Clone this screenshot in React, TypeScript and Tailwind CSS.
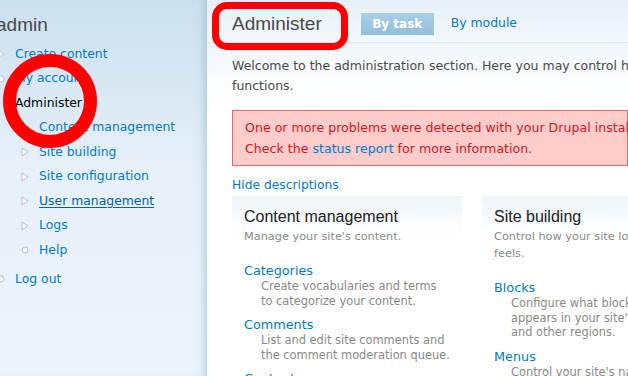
import React from "react";

const verdana = { fontFamily: '"DejaVu Sans", Verdana, sans-serif' };
const arial = { fontFamily: '"Liberation Sans", Arial, sans-serif' };

const Triangle = () => (
  <svg width="8" height="10" viewBox="0 0 8 10" className="shrink-0">
    <path d="M1 1 L7 5 L1 9 Z" fill="#ffffff" stroke="#b8bcc0" strokeWidth="1" strokeLinejoin="round" />
  </svg>
);

const Circle = () => (
  <svg width="8" height="8" viewBox="0 0 8 8" className="shrink-0">
    <circle cx="4" cy="4" r="3" fill="#ffffff" stroke="#b8bcc0" strokeWidth="1" />
  </svg>
);

type Item = { label: string; bullet: "tri" | "dot" | "none"; active?: boolean; hover?: boolean };

const topItems: Item[] = [
  { label: "Create content", bullet: "tri" },
  { label: "My account", bullet: "dot" },
  { label: "Administer", bullet: "none", active: true },
];

const subItems: Item[] = [
  { label: "Content management", bullet: "tri" },
  { label: "Site building", bullet: "tri" },
  { label: "Site configuration", bullet: "tri" },
  { label: "User management", bullet: "tri", hover: true },
  { label: "Logs", bullet: "tri" },
  { label: "Help", bullet: "dot" },
];

const MenuRow = ({ item }: { item: Item }) => (
  <div className="flex h-[24.5px] items-center gap-[10px]">
    <div className="flex w-[9px] justify-center">
      {item.bullet === "tri" && <Triangle />}
      {item.bullet === "dot" && <Circle />}
    </div>
    <span
      className={
        item.active
          ? "text-black"
          : item.hover
          ? "text-[#0062a0] underline underline-offset-2"
          : "text-[#027ac6]"
      }
    >
      {item.label}
    </span>
  </div>
);

const Sidebar = () => (
  <div
    className="relative h-[376px] w-[207px] shrink-0 bg-gradient-to-b from-[#cbe0ee] via-[#e6f0f9] via-45% to-[#ecf4fb] shadow-[inset_-9px_0_8px_-6px_rgba(120,165,200,0.45)]"
    style={verdana}
  >
    <div className="ml-[-4px] pt-[12px] text-[12.4px]">
      <h2 className="text-[19px] leading-[26px] text-[#494949]" style={arial}>
        admin
      </h2>
      <div className="mt-[4px]">
        {topItems.map((it) => (
          <MenuRow key={it.label} item={it} />
        ))}
        <div className="ml-[24px]">
          {subItems.map((it) => (
            <MenuRow key={it.label} item={it} />
          ))}
        </div>
        <div className="mt-[4.5px]">
          <MenuRow item={{ label: "Log out", bullet: "dot" }} />
        </div>
      </div>
    </div>
  </div>
);

type Entry = { title: string; lines: string[] };

const Panel = ({ title, desc, entries }: { title: string; desc: string[]; entries: Entry[] }) => (
  <div className="w-[230px] shrink-0 bg-gradient-to-b from-[#edf4fa] to-white to-[40px] px-[12px] pt-[10px]">
    <h3 className="text-[16px] leading-[22px] text-[#222]" style={arial}>
      {title}
    </h3>
    <div className="text-[11.3px] leading-[17px] text-[#898989]">
      {desc.map((l) => (
        <div key={l} className="whitespace-nowrap">{l}</div>
      ))}
    </div>
    <div className="mt-[17px] flex flex-col gap-[8px]">
      {entries.map((e) => (
        <div key={e.title}>
          <div className="text-[12.8px] leading-[17px] text-[#027ac6]">{e.title}</div>
          <div className="pl-[17px] text-[11.4px] leading-[14.5px] text-[#898989]">
            {e.lines.map((l) => (
              <div key={l} className="whitespace-nowrap">{l}</div>
            ))}
          </div>
        </div>
      ))}
    </div>
  </div>
);

const Main = () => (
  <div className="relative min-w-0 flex-1 overflow-hidden bg-white" style={verdana}>
    <div className="flex h-[43px] items-center border-b border-[#dde9f2] bg-gradient-to-b from-[#e6f0f8] to-[#f3f8fc] pl-[25px] pt-[5px]">
      <h2 className="mr-[39px] text-[19px] leading-[24px] text-[#494949]" style={arial}>
        Administer
      </h2>
      <div className="flex h-[22px] w-[73px] items-center justify-center bg-gradient-to-b from-[#abd0e8] to-[#93bddb] text-[12px] font-bold text-white">
        By task
      </div>
      <div className="ml-[17px] text-[12.4px] text-[#027ac6]">By module</div>
    </div>
    <div className="bg-gradient-to-b from-[#f1f7fc] to-white to-[60px] pl-[25px] pt-[13px]">
      <p className="whitespace-nowrap text-[12.5px] leading-[20px] text-[#494949]">
        Welcome to the administration section. Here you may control how your site
        <br />
        functions.
      </p>
      <div className="mt-[14px] whitespace-nowrap border border-[#e06a6a] bg-[#ffcccc] py-[6px] pl-[12px] text-[12.6px] leading-[21px] text-[#d01818]">
        One or more problems were detected with your Drupal installation.
        <br />
        Check the <span className="text-[#027ac6]">status report</span> for more information.
      </div>
      <div className="mt-[9px] text-[12.3px] leading-[20px] text-[#027ac6]">Hide descriptions</div>
      <div className="mt-[1px] flex gap-[20px]">
        <Panel
          title="Content management"
          desc={["Manage your site's content."]}
          entries={[
            { title: "Categories", lines: ["Create vocabularies and terms", "to categorize your content."] },
            { title: "Comments", lines: ["List and edit site comments and", "the comment moderation queue."] },
            { title: "Content", lines: ["View, edit, and delete your", "site's content."] },
          ]}
        />
        <Panel
          title="Site building"
          desc={["Control how your site looks and", "feels."]}
          entries={[
            { title: "Blocks", lines: ["Configure what block content", "appears in your site's sidebars", "and other regions."] },
            { title: "Menus", lines: ["Control your site's navigation", "menu, primary links and"] },
          ]}
        />
      </div>
    </div>
  </div>
);

export default function App() {
  return (
    <div className="relative flex h-[376px] w-[628px] overflow-hidden">
      <Sidebar />
      <Main />
      {/* red annotation marks */}
      <div className="pointer-events-none absolute left-[3px] top-[54px] h-[94px] w-[94px] rounded-full border-[13px] border-[#ff0000]" />
      <div className="pointer-events-none absolute left-[212px] top-[2px] h-[48px] w-[136px] rounded-[15px] border-[7px] border-[#ff0000]" />
    </div>
  );
}
